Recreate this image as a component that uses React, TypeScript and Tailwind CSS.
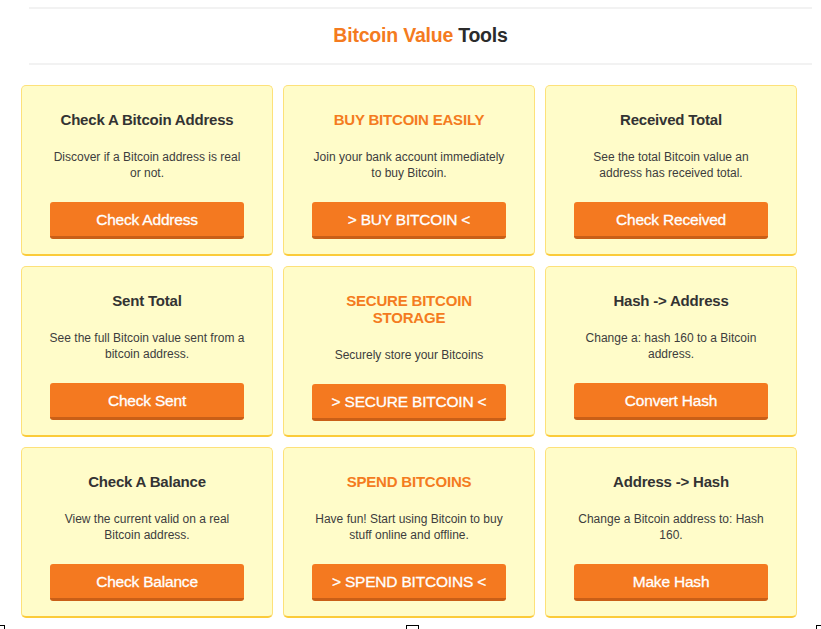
import React from "react";

type Card = {
  title: React.ReactNode;
  orange?: boolean;
  desc: React.ReactNode;
  button: string;
};

const cards: Card[] = [
  { title: "Check A Bitcoin Address", desc: <>Discover if a Bitcoin address is real<br />or not.</>, button: "Check Address" },
  { title: "BUY BITCOIN EASILY", orange: true, desc: <>Join your bank account immediately<br />to buy Bitcoin.</>, button: "> BUY BITCOIN <" },
  { title: "Received Total", desc: <>See the total Bitcoin value an<br />address has received total.</>, button: "Check Received" },
  { title: "Sent Total", desc: <>See the full Bitcoin value sent from a<br />bitcoin address.</>, button: "Check Sent" },
  { title: <>SECURE BITCOIN<br />STORAGE</>, orange: true, desc: <>Securely store your Bitcoins</>, button: "> SECURE BITCOIN <" },
  { title: "Hash -> Address", desc: <>Change a: hash 160 to a Bitcoin<br />address.</>, button: "Convert Hash" },
  { title: "Check A Balance", desc: <>View the current valid on a real<br />Bitcoin address.</>, button: "Check Balance" },
  { title: "SPEND BITCOINS", orange: true, desc: <>Have fun! Start using Bitcoin to buy<br />stuff online and offline.</>, button: "> SPEND BITCOINS <" },
  { title: "Address -> Hash", desc: <>Change a Bitcoin address to: Hash<br />160.</>, button: "Make Hash" },
];

export default function App() {
  return (
    <div
      className="relative w-[821px] h-[629px] overflow-hidden bg-white"
      style={{ fontFamily: '"Liberation Sans", Arial, Helvetica, sans-serif' }}
    >
      <div className="pt-[7px] pl-[29px] pr-[9px]">
        <div className="h-[2px] bg-[#f2f2f2]" />
        <div className="h-[54px] flex items-center justify-center text-[19.5px] font-bold tracking-[-0.2px]">
          <span className="text-[#f47b20]">Bitcoin Value</span>
          <span className="text-[#2b2b2b] ml-[5px]">Tools</span>
        </div>
        <div className="h-[2px] bg-[#f2f2f2]" />
      </div>
      <div className="ml-[21px] mt-[20px] w-[776px] grid grid-cols-3 gap-x-[10px] gap-y-[10px]">
        {cards.map((c, i) => (
          <div
            key={i}
            className="h-[171px] bg-[#fffcc9] border border-[#fde17a] border-b-2 border-b-[#fbcb3a] rounded-[5px] pt-[25px] flex flex-col items-center text-center"
          >
            <div
              className={
                "text-[15px] leading-[17px] font-bold tracking-[-0.2px] " +
                (c.orange ? "text-[#f47b20]" : "text-[#333333]")
              }
            >
              {c.title}
            </div>
            <div className="mt-[21px] text-[12px] leading-[16px] text-[#3d3d3d] whitespace-nowrap">
              {c.desc}
            </div>
            <div className="mt-[21px] w-[194px] h-[37px] pt-[2px] bg-[#f47920] border-b-[3px] border-b-[#c95f17] rounded-[3px] flex items-center justify-center text-white text-[15.5px] tracking-[-0.2px] [-webkit-text-stroke:0.3px_white]">
              {c.button}
            </div>
          </div>
        ))}
      </div>
      <div className="absolute left-0 top-[625px] w-[5px] h-[5px] border-t border-r border-black" />
      <div className="absolute left-[406px] top-[625px] w-[13px] h-[5px] border-t border-l border-r border-black" />
      <div className="absolute left-[816px] top-[625px] w-[6px] h-[5px] border-t border-l border-black" />
    </div>
  );
}
